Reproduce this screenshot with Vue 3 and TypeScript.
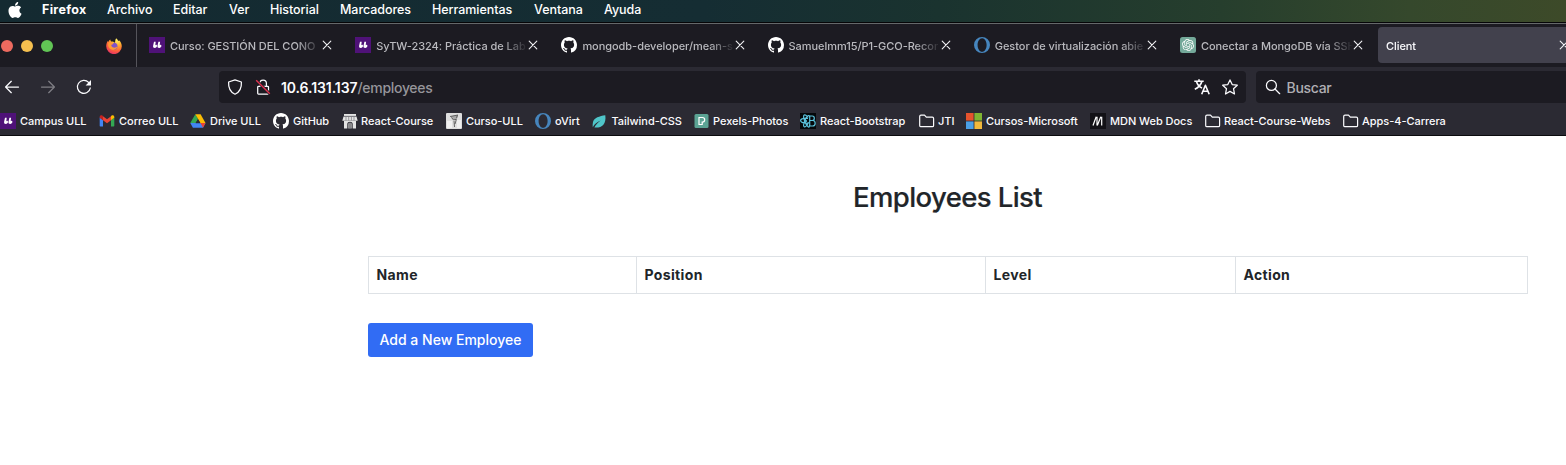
<script setup lang="ts">
interface MenuEntry {
  label: string
  width: number
}
interface Tab {
  icon?: string
  title: string
  active?: boolean
}
interface Bookmark {
  icon: string
  label: string
  width: number
  gap: number
}

const menus: MenuEntry[] = [
  { label: 'Firefox', width: 65 },
  { label: 'Archivo', width: 66 },
  { label: 'Editar', width: 56 },
  { label: 'Ver', width: 41 },
  { label: 'Historial', width: 70 },
  { label: 'Marcadores', width: 92 },
  { label: 'Herramientas', width: 102 },
  { label: 'Ventana', width: 70 },
  { label: 'Ayuda', width: 60 },
]

const tabs: Tab[] = [
  { icon: 'ull', title: 'Curso: GESTIÓN DEL CONO' },
  { icon: 'ull', title: 'SyTW-2324: Práctica de Lab' },
  { icon: 'github', title: 'mongodb-developer/mean-s' },
  { icon: 'github', title: 'Samuelmm15/P1-GCO-Recor' },
  { icon: 'ovirt', title: 'Gestor de virtualización abie' },
  { icon: 'openai', title: 'Conectar a MongoDB vía SSH' },
  { title: 'Client', active: true },
]

const bookmarks: Bookmark[] = [
  { icon: 'ull', label: 'Campus ULL', width: 99, gap: 4 },
  { icon: 'gmail', label: 'Correo ULL', width: 91, gap: 4 },
  { icon: 'drive', label: 'Drive ULL', width: 83, gap: 4 },
  { icon: 'github', label: 'GitHub', width: 69, gap: 4 },
  { icon: 'store', label: 'React-Course', width: 104, gap: 3 },
  { icon: 'sketch', label: 'Curso-ULL', width: 89, gap: 4 },
  { icon: 'ovirt', label: 'oVirt', width: 56, gap: 4 },
  { icon: 'leaf', label: 'Tailwind-CSS', width: 102.500, gap: 4.500 },
  { icon: 'pexels', label: 'Pexels-Photos', width: 106.500, gap: 3.500 },
  { icon: 'reactbs', label: 'React-Bootstrap', width: 119, gap: 4 },
  { icon: 'folder', label: 'JTI', width: 47, gap: 3 },
  { icon: 'microsoft', label: 'Cursos-Microsoft', width: 124, gap: 4 },
  { icon: 'mdn', label: 'MDN Web Docs', width: 115, gap: 4 },
  { icon: 'folder', label: 'React-Course-Webs', width: 138, gap: 3 },
  { icon: 'folder', label: 'Apps-4-Carrera', width: 120, gap: 3 },
]

const columns: string[] = ['Name', 'Position', 'Level', 'Action']
</script>

<template>
  <div class="screen">
    <svg class="sprite" aria-hidden="true">
      <defs>
        <radialGradient id="fox" cx="0.68" cy="0.1" r="1">
          <stop offset="0" stop-color="#fff36b" />
          <stop offset="0.35" stop-color="#ffb02e" />
          <stop offset="0.65" stop-color="#ff6a35" />
          <stop offset="1" stop-color="#e3266e" />
        </radialGradient>
      </defs>
      <symbol id="i-ull" viewBox="0 0 16 16">
        <path fill="#4f1278" d="M0 0h16v16H0z" />
        <path fill="#fff" d="M5 4.800h1.700L6.300 8.200c.6-.9 1.700-.6 1.700.6 0 1.300-1 2.200-2.200 2.200-1.300 0-1.900-.8-1.700-2.200zM9.400 4.800h1.700l-.4 3.400c.6-.9 1.700-.6 1.700.6 0 1.300-1 2.200-2.200 2.200-1.300 0-1.900-.8-1.700-2.200z" />
      </symbol>
      <symbol id="i-github" viewBox="0 0 16 16">
        <path fill="#fff" d="M8 0C3.580 0 0 3.580 0 8c0 3.540 2.290 6.530 5.470 7.590.4.070.55-.17.55-.38 0-.19-.01-.82-.01-1.490-2.010.37-2.530-.49-2.690-.94-.09-.23-.48-.94-.82-1.130-.28-.15-.68-.52-.01-.53.63-.01 1.080.58 1.230.82.72 1.210 1.870.87 2.330.66.07-.52.28-.87.51-1.070-1.780-.2-3.640-.89-3.640-3.950 0-.87.31-1.590.82-2.150-.08-.2-.36-1.020.08-2.120 0 0 .67-.21 2.200.82.64-.18 1.320-.27 2-.27s1.360.09 2 .27c1.530-1.040 2.200-.82 2.200-.82.44 1.100.16 1.920.08 2.120.51.56.82 1.270.82 2.150 0 3.070-1.870 3.750-3.650 3.950.29.25.54.73.54 1.480 0 1.070-.01 1.930-.01 2.200 0 .21.15.46.55.38A8.010 8.010 0 0 0 16 8c0-4.420-3.580-8-8-8z" />
      </symbol>
      <symbol id="i-ovirt" viewBox="0 0 16 16">
        <path fill="#4685bd" fill-rule="evenodd" d="M8 0a8 8 0 1 0 0 16A8 8 0 0 0 8 0zm.1 1.200c2.600 0 4.500 3 4.500 6.800s-1.900 6.800-4.500 6.800S3.600 11.800 3.600 8s1.900-6.800 4.500-6.800z" />
      </symbol>
      <symbol id="i-openai" viewBox="0 0 16 16">
        <rect width="16" height="16" rx="2.500" fill="#74a99a" />
        <path transform="translate(2 2) scale(.5)" fill="#fff" d="M22.2819 9.8211a5.9847 5.9847 0 0 0-.5157-4.9108 6.0462 6.0462 0 0 0-6.5098-2.9A6.0651 6.0651 0 0 0 4.9807 4.1818a5.9847 5.9847 0 0 0-3.9977 2.9 6.0462 6.0462 0 0 0 .7427 7.0966 5.98 5.98 0 0 0 .511 4.9107 6.051 6.051 0 0 0 6.5146 2.9001A5.9847 5.9847 0 0 0 13.2599 24a6.0557 6.0557 0 0 0 5.7718-4.2058 5.9894 5.9894 0 0 0 3.9977-2.9001 6.0557 6.0557 0 0 0-.7475-7.0729zm-9.022 12.6081a4.4755 4.4755 0 0 1-2.8764-1.0408l.1419-.0804 4.7783-2.7582a.7948.7948 0 0 0 .3927-.6813v-6.7369l2.02 1.1686a.071.071 0 0 1 .038.052v5.5826a4.504 4.504 0 0 1-4.4945 4.4944zm-9.6607-4.1254a4.4708 4.4708 0 0 1-.5346-3.0137l.142.0852 4.783 2.7582a.7712.7712 0 0 0 .7806 0l5.8428-3.3685v2.3324a.0804.0804 0 0 1-.0332.0615L9.74 19.9502a4.4992 4.4992 0 0 1-6.1408-1.6464zM2.3408 7.8956a4.485 4.485 0 0 1 2.3655-1.9728V11.6a.7664.7664 0 0 0 .3879.6765l5.8144 3.3543-2.0201 1.1685a.0757.0757 0 0 1-.071 0l-4.8303-2.7865A4.504 4.504 0 0 1 2.3408 7.872zm16.5963 3.8558L13.1038 8.364 15.1192 7.2a.0757.0757 0 0 1 .071 0l4.8303 2.7913a4.4944 4.4944 0 0 1-.6765 8.1042v-5.6772a.79.79 0 0 0-.407-.667zm2.0107-3.0231l-.142-.0852-4.7735-2.7818a.7759.7759 0 0 0-.7854 0L9.409 9.2297V6.8974a.0662.0662 0 0 1 .0284-.0615l4.8303-2.7866a4.4992 4.4992 0 0 1 6.6802 4.66zM8.3065 12.863l-2.02-1.1638a.0804.0804 0 0 1-.038-.0567V6.0742a4.4992 4.4992 0 0 1 7.3757-3.4537l-.142.0805L8.704 5.459a.7948.7948 0 0 0-.3927.6813zm1.0976-2.3654l2.602-1.4998 2.6069 1.4998v2.9994l-2.5974 1.4997-2.6067-1.4997Z" />
      </symbol>
      <symbol id="i-gmail" viewBox="0 0 16 16">
        <path fill="#4285f4" d="M1.300 13.500H4V7.200L.7 4.500v8.300c0 .4.200.7.6.7z" />
        <path fill="#34a853" d="M12 13.500h2.700c.4 0 .6-.3.6-.7V4.500L12 7.200z" />
        <path fill="#fbbc04" d="M12 3.300v3.900l3.300-2.500V3.900c0-1.500-1.600-2.200-2.700-1.400z" />
        <path fill="#ea4335" d="M4 7.200V3.300l4 3 4-3v3.900l-4 3z" />
        <path fill="#c5221f" d="M.7 3.900v.8L4 7.200V3.300l-.6-.8C2.200 1.700.7 2.400.7 3.900z" />
      </symbol>
      <symbol id="i-drive" viewBox="0 0 16 16">
        <path fill="#34a853" d="M5.300 1.300 8 6.100 5.600 10.100H.3z" />
        <path fill="#fbbc04" d="M5.300 1.300h5.300l4.900 8.800h-5.100z" />
        <path fill="#4285f4" d="M5.600 10.100h9.900L13 14.700H2.900L.3 10.100z" />
        <path fill="#ea4335" d="M10.400 10.100h5.100L13 14.700z" />
        <path fill="#2b2a33" d="M8 6.200 10.400 10.200H5.600z" />
      </symbol>
      <symbol id="i-store" viewBox="0 0 16 16">
        <path fill="#e4e4e4" d="M2 1h12v2H2zM1.500 3.500h13l1.200 4.200H.3zM2 8h12v7.500h-3.300V11c0-3-5.400-3-5.400 0v4.500H2z" />
        <path fill="none" stroke="#77767c" stroke-width=".7" d="M4 3.500v4M6.700 3.500v4M9.400 3.500v4M12 3.500v4M2 3.300h12" />
        <path fill="#bbb" d="M6.300 11c0-1.700 3.400-1.700 3.400 0v4.500H6.300z" />
        <path stroke="#3b3a42" stroke-width=".8" d="M8 10v5.500" />
      </symbol>
      <symbol id="i-sketch" viewBox="0 0 16 16">
        <rect width="16" height="16" rx="1" fill="#dedede" />
        <path fill="#f0f0f0" d="M1 8h5v7H1zM11 7h4v8h-4z" />
        <path fill="#a9a9a9" d="M4.500 3.200 11 2.200l1 1.500-1.700 3-3-.3L5.500 5z" />
        <path fill="none" stroke="#444" stroke-width=".8" d="M4 3.500 12 2M11.500 2.200l-1 2.600M8 8l.5 6M10.300 6.500 9 11M5.500 4.500l2 2.500 3-.8" />
      </symbol>
      <symbol id="i-leaf" viewBox="0 0 16 16">
        <path fill="#4fc5c9" d="M14.300 2.200C8.500 3 3 4.800 2 9c-.4 1.700-.5 3.600-.2 5.200 1.500-3 4.400-5.300 7.900-6.700-2.700 2-5 4.300-6.300 7 6.800.8 12.200-2.800 10.900-12.300z" />
      </symbol>
      <symbol id="i-pexels" viewBox="0 0 16 16">
        <rect x=".5" y="1" width="14" height="14" rx="1.500" fill="#5ba394" />
        <path fill="none" stroke="#fff" stroke-width="1.200" d="M5 4.500h3.500c2.900 0 2.900 4.500 0 4.500H8.200v2.500H5z" />
      </symbol>
      <symbol id="i-reactbs" viewBox="0 0 16 16">
        <path fill="#05080a" d="M0 0h16v16H0z" />
        <g fill="none" stroke="#5cc3dd" stroke-width="1.200">
          <path d="M9.700 3h2.600c2.700 0 2.700 4.500 0 4.500H9.700zM9.700 7.500h3c3.300 0 3.300 5.500 0 5.500h-3z" />
          <path d="M8 4.500C5 0 2.200 1.500 4.500 7.500S9.500 16.500 9.500 12M8 10.500C5 16 2.200 14.500 4.500 8.500S9 1 9.500 4M8 5.500C2 4.500-1 7 1.500 9s5 1.500 8 .7" />
        </g>
        <circle cx="6" cy="8" r="1.100" fill="#5cc3dd" />
      </symbol>
      <symbol id="i-folder" viewBox="0 0 16 16">
        <path fill="none" stroke="#fbfbfe" stroke-width="1.200" stroke-linejoin="round" d="M.7 3.400c0-.8.500-1.300 1.300-1.300h3.500l1.800 2h6c.8 0 1.300.5 1.300 1.300v7c0 .8-.5 1.300-1.300 1.300H2c-.8 0-1.300-.5-1.300-1.300z" />
      </symbol>
      <symbol id="i-microsoft" viewBox="0 0 16 16">
        <path fill="#e5532d" d="M0 0h7.600v7.600H0z" />
        <path fill="#7fb432" d="M8.400 0H16v7.600H8.400z" />
        <path fill="#4a9fe6" d="M0 8.400h7.600V16H0z" />
        <path fill="#f0b83c" d="M8.400 8.400H16V16H8.400z" />
      </symbol>
      <symbol id="i-mdn" viewBox="0 0 16 16">
        <path fill="#121116" d="M0 0h16v16H0z" />
        <path fill="none" stroke="#fff" stroke-width="1.200" d="M3 12.500 6.200 3.800M7 12.500V3.800M7.300 12.500l3.500-8.700M11.700 12.500V3.800" />
      </symbol>
      <symbol id="i-close" viewBox="0 0 10 10">
        <path fill="none" stroke="#f2f2f5" stroke-width="1.100" stroke-linecap="round" d="m1.200 1.200 7.600 7.600M8.800 1.200 1.200 8.800" />
      </symbol>
    </svg>

    <header class="menubar">
      <svg class="apple" viewBox="0 0 24 24"><path fill="#fff" d="M12.152 6.896c-.948 0-2.415-1.078-3.960-1.040-2.040.027-3.910 1.183-4.961 3.014-2.117 3.675-.546 9.103 1.519 12.090 1.013 1.454 2.208 3.090 3.792 3.039 1.520-.065 2.090-.987 3.935-.987 1.831 0 2.350.987 3.960.948 1.637-.026 2.676-1.480 3.676-2.948 1.156-1.688 1.636-3.325 1.662-3.415-.039-.013-3.182-1.221-3.220-4.857-.026-3.040 2.480-4.494 2.597-4.559-1.429-2.090-3.623-2.324-4.390-2.376-2-.156-3.675 1.090-4.610 1.090zM15.530 3.830c.843-1.012 1.400-2.427 1.245-3.830-1.207.052-2.662.805-3.532 1.818-.78.896-1.454 2.338-1.273 3.714 1.338.104 2.715-.688 3.559-1.701" /></svg>
      <span v-for="m in menus" :key="m.label" class="menu" :style="{ width: m.width + 'px' }">{{ m.label }}</span>
    </header>

    <div class="tabbar">
      <div class="window-area">
        <i class="light red" /><i class="light yellow" /><i class="light green" />
        <svg class="fox" viewBox="0 0 16 16">
          <path fill="url(#fox)" d="M10.200.3c.9.800 1.700 1.700 2 2.700.5-.1.700-.4.800-.7 1.500 1.300 2.800 3.400 2.800 6a7.800 7.800 0 0 1-15.600 0c0-2.300.7-4 1.600-5.300l.5 1.100C2.700 2.900 3.500 2 4.300 1.500c0 .8.300 1.500.8 2C6.500 3.400 8 3.800 9 5c.2-1.700.2-3.500 1.200-4.700z" />
          <circle cx="8" cy="8.200" r="3.500" fill="#8052c9" />
          <path fill="#ff9a35" d="M2.500 5c2-.9 3.800-.4 5.200.5-.8 1-2.200.8-2.500 2 1.200 2.700 4.500 2.800 6.300.8-.2 3.500-5.700 5.200-8.300 1.500C2 8.200 2 6.500 2.500 5z" />
        </svg>
      </div>
      <div v-for="t in tabs" :key="t.title" class="tab" :class="{ active: t.active }">
        <svg v-if="t.icon" class="icon"><use :href="'#i-' + t.icon" /></svg>
        <span class="tab-title">{{ t.title }}</span>
        <svg class="close"><use href="#i-close" /></svg>
      </div>
    </div>

    <nav class="toolbar">
      <svg class="icon back" viewBox="0 0 16 16"><path class="line" d="M14.500 8H1.800M7.300 2.300 1.600 8l5.700 5.700" /></svg>
      <svg class="icon forward" viewBox="0 0 16 16"><path class="line" d="M1.500 8h12.700M8.700 2.300 14.400 8l-5.700 5.700" /></svg>
      <svg class="icon reload" viewBox="0 0 16 16"><path class="line" d="M14.300 9A6.500 6.500 0 1 1 12.600 3.400L14 4.800" /><path fill="#fbfbfe" d="M15 1v5.400H9.600z" /></svg>
      <div class="field url">
        <svg class="icon shield" viewBox="0 0 16 16"><path class="line" d="M8 .9 14.400 3c.3 5.200-1.300 10-6.400 12.200C2.900 13 1.300 8.200 1.600 3z" /></svg>
        <svg class="icon lock" viewBox="0 0 16 16">
          <path class="line" d="M4.800 7V4.300a3.300 3.300 0 0 1 6.600 0V7M3.500 7.300h9.200c.5 0 .8.300.8.800v6.200c0 .5-.3.800-.8.800H3.500c-.5 0-.8-.3-.8-.8V8.100c0-.5.300-.8.800-.8z" />
          <path stroke="#1c1b22" stroke-width="3" d="m1.500 1.500 13.300 13.300" />
          <path stroke="#e0314f" stroke-width="1.400" d="m1.200 1.200 13.600 13.600" />
        </svg>
        <span class="address"><b>10.6.131.137</b>/employees</span>
        <svg class="icon translate" viewBox="0 0 16 16"><path class="line bold" d="M.3 2.300h9.400M5 .3v2M7.800 2.500C7 5.900 4.200 8.600.8 10.300M2.500 2.500C3.300 5.500 5.500 7.900 8 9.100M7.700 15.300l3.700-9 3.800 9M9 12.300h5" /></svg>
        <svg class="icon star" viewBox="0 0 16 16"><path class="line" d="m8 .9 2.200 4.700 5.100.6-3.800 3.500 1 5.300L8 12.400 3.500 15l1-5.300L.7 6.200l5.100-.6z" /></svg>
      </div>
      <div class="field search">
        <svg class="icon glass" viewBox="0 0 16 16"><circle class="line" cx="6.400" cy="6.400" r="5" /><path class="line" d="m10 10 4.700 4.700" /></svg>
        <span class="placeholder">Buscar</span>
      </div>
    </nav>

    <nav class="bookmarks">
      <a v-for="b in bookmarks" :key="b.label" class="bookmark" :style="{ width: b.width + 'px', gap: b.gap + 'px' }">
        <svg class="icon"><use :href="'#i-' + b.icon" /></svg>
        <span>{{ b.label }}</span>
      </a>
    </nav>

    <main class="page">
      <h2>Employees List</h2>
      <table>
        <colgroup><col class="c-name"><col class="c-position"><col class="c-level"><col class="c-action"></colgroup>
        <thead>
          <tr><th v-for="c in columns" :key="c">{{ c }}</th></tr>
        </thead>
      </table>
      <button type="button">Add a New Employee</button>
    </main>
  </div>
</template>

<style>
html, body { margin: 0; background: #fff; }
</style>

<style scoped>
.screen {
  width: 1566px;
  height: 465px;
  overflow: hidden;
  background: #fff;
  font-family: Inter, "Liberation Sans", sans-serif;
}
.screen * { box-sizing: border-box; }
.sprite { position: absolute; width: 0; height: 0; }
.icon { width: 16px; height: 16px; flex: none; display: block; }
.line { fill: none; stroke: #fbfbfe; stroke-width: 1.25; stroke-linecap: round; stroke-linejoin: round; }
.line.bold { stroke-width: 1.6; stroke-linecap: butt; }

.menubar {
  height: 22px;
  display: flex;
  align-items: center;
  padding: 0 0 3px 7px;
  background: linear-gradient(90deg, #142a31 0, #152d33 45%, #1a332f 60%, #263e2d 78%, #35482c 90%, #3d4a29 100%);
}
.apple { width: 16px; height: 16px; margin-right: 19px; flex: none; }
.menu { flex: none; font-size: 12.5px; line-height: 15px; padding-bottom: 1px; font-weight: 500; letter-spacing: -0.05px; color: #fff; white-space: nowrap; }
.menu:nth-of-type(1) { font-weight: 700; letter-spacing: 0.3px; }

.tabbar {
  height: 45px;
  display: flex;
  background: #1c1b22;
  border-top: 1px solid #050507;
  box-shadow: inset 0 1px #65686a;
  overflow: hidden;
}
.window-area {
  width: 137px;
  flex: none;
  display: flex;
  align-items: center;
  border-right: 1px solid #55545b;
  margin-top: 1px;
}
.light { width: 12px; height: 12px; border-radius: 50%; margin-right: 8px; flex: none; }
.light.red { background: #ed6a5f; margin-left: 1px; }
.light.yellow { background: #f5bf4f; }
.light.green { background: #61c555; }
.fox { width: 16px; height: 16px; margin-left: 45px; }
.tab {
  width: 206.2px;
  flex: none;
  display: flex;
  align-items: center;
  padding: 0 11px 0 12px;
}
.tab-title {
  flex: 1;
  min-width: 0;
  margin: 1px 0 0 5px;
  overflow: hidden;
  white-space: nowrap;
  color: #b9b9be;
  font-size: 11px;
  font-weight: 500;
  line-height: 16px;
  letter-spacing: -0.05px;
  mask-image: linear-gradient(90deg, #000 calc(100% - 26px), transparent);
}
.close { width: 10px; height: 10px; flex: none; }
.tab.active {
  height: 36px;
  width: 200px;
  margin: 4px 0 0 3.800px;
  padding: 0 10px 0 8px;
  background: #42414d;
  border-radius: 4px;
}
.tab.active .tab-title { color: #fbfbfe; margin: 2px 0 0; }
.tab.active .close { margin-right: -1px; }

.toolbar { height: 41px; display: flex; align-items: center; background: #2b2a33; padding: 0 0 1px 4px; }
.forward { margin-left: 20px; opacity: .4; }
.reload { margin-left: 20px; }
.field { height: 32px; flex: none; display: flex; align-items: center; border-radius: 4px; background: #1c1b22; }
.url { width: 1027px; margin-left: 127px; padding: 0 8px; }
.lock { margin-left: 12px; }
.address { flex: 1; margin-left: 10px; padding-top: 1px; color: #96959b; font-size: 14px; font-weight: 500; letter-spacing: -0.3px; }
.address b { font-weight: 600; letter-spacing: -0.08px; color: #fbfbfe; }
.star { margin-left: 12px; }
.search { width: 320px; margin-left: 10px; padding-left: 9px; }
.placeholder { margin-left: 5.5px; padding-top: 1px; color: #b0afb4; font-size: 14px; font-weight: 500; letter-spacing: -0.3px; }

.bookmarks { height: 28px; display: flex; background: #2b2a33; border-bottom: 1px solid #0b0b0e; padding-bottom: 1px; }
.bookmark { flex: none; display: flex; align-items: center; color: #fbfbfe; font-size: 11px; font-weight: 500; letter-spacing: -0.04px; white-space: nowrap; }

.page { width: 1160px; margin-left: 368px; padding-top: 43px; color: #212529; }
h2 { margin: 0 1px 0 0; text-align: center; font-size: 27.5px; line-height: 36px; font-weight: 500; letter-spacing: -0.6px; -webkit-text-stroke: 0.2px #212529; }
table { width: 1160px; margin-top: 41px; table-layout: fixed; border-collapse: collapse; }
.c-name { width: 268px; }
.c-position { width: 349px; }
.c-level { width: 250px; }
th { height: 37px; padding: 0 7px 2px 7.500px; border: 1px solid #dee2e6; text-align: left; font-size: 14px; font-weight: 700; letter-spacing: 0.35px; }
button {
  display: block;
  width: 165px;
  height: 34px;
  margin-top: 29px;
  padding: 0 0 2px;
  border: 0;
  border-radius: 3px;
  background: #316cf4;
  color: #fff;
  font: 500 14px Inter, "Liberation Sans", sans-serif;
}
</style>
